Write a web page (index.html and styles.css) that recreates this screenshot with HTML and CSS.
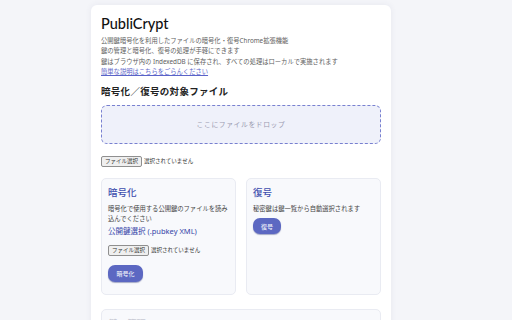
FILE: index.html
```html
<!DOCTYPE html>
<html lang="ja">
<head>
  <meta charset="UTF-8">
  <title>PubliCrypt</title>
  <link rel="stylesheet" href="styles.css">
</head>
<body>
  <div class="container">
    <h1>PubliCrypt</h1>
    <div class="descricao">
      <p>公開鍵暗号化を利用したファイルの暗号化・復号Chrome拡張機能</p>
      <p>鍵の管理と暗号化、復号の処理が手軽にできます</p>
      <p>鍵はブラウザ内の IndexedDB に保存され、すべての処理はローカルで実施されます</p>
      <p><a href="#">簡単な説明はこちらをごらんください</a></p>
    </div>

    <h2>暗号化／復号の対象ファイル</h2>
    <div class="dropzone">ここにファイルをドロップ</div>
    <div class="arquivo">
      <span class="btn-arquivo">ファイル選択</span>
      <span>選択されていません</span>
    </div>

    <div class="cartoes">
      <div class="cartao">
        <h3>暗号化</h3>
        <p class="texto">暗号化で使用する公開鍵のファイルを読み込んでください</p>
        <div class="link-chave">公開鍵選択 (.pubkey XML)</div>
        <div class="arquivo pequeno">
          <span class="btn-arquivo">ファイル選択</span>
          <span>選択されていません</span>
        </div>
        <button class="btn-acao">暗号化</button>
      </div>
      <div class="cartao">
        <h3>復号</h3>
        <p class="texto">秘密鍵は鍵一覧から自動選択されます</p>
        <button class="btn-acao curto">復号</button>
      </div>
    </div>

    <div class="cartao largo">
      <h3 class="apagado">鍵の管理</h3>
    </div>
  </div>
</body>
</html>
```

FILE: styles.css
```css
body {
  background-color: #f4f5f9;
  margin: 0;
  font-family: "Noto Sans", "Noto Sans CJK JP", sans-serif;
  color: #222;
}

.container {
  width: 280px;
  margin: 5px 0 0 91px;
  padding: 10px 10px 20px;
  background-color: white;
  border-radius: 6px;
  box-shadow: 0 0 6px rgba(60, 70, 120, 0.08);
}

h1 {
  font-family: Lato, "Noto Sans", sans-serif;
  font-size: 14.5px;
  font-weight: 500;
  margin: 0 0 3px;
  line-height: 18px;
  color: #111;
}

.descricao p {
  margin: 0;
  font-size: 6.3px;
  line-height: 10.4px;
  color: #606060;
  white-space: nowrap;
}

.descricao a {
  color: #5a63c8;
}

h2 {
  font-size: 9.5px;
  font-weight: 600;
  letter-spacing: 0.3px;
  margin: 7px 0 6px;
  line-height: 14px;
  color: #222;
}

.dropzone {
  height: 37px;
  border: 1px dashed #7880d0;
  border-radius: 6px;
  background-color: #eff1fa;
  display: flex;
  align-items: center;
  justify-content: center;
  font-size: 6.8px;
  letter-spacing: 0.6px;
  color: #9a9ab0;
}

.arquivo {
  display: flex;
  align-items: center;
  gap: 2px;
  margin: 12px 0 0;
  font-size: 5.5px;
  color: #333;
}

.btn-arquivo {
  border: 1px solid #8f8f8f;
  border-radius: 2px;
  background-color: #efefef;
  padding: 1px 3px;
  line-height: 7px;
}

.cartoes {
  display: grid;
  grid-template-columns: 1fr 1fr;
  gap: 10px;
  margin-top: 11px;
}

.cartao {
  box-sizing: border-box;
  background-color: #f8f9fc;
  border: 1px solid #e9ebf2;
  border-radius: 5px;
  padding: 7px 6px;
  height: 117px;
}

.cartao h3 {
  font-size: 9.5px;
  font-weight: 500;
  color: #3f4fae;
  margin: 0 0 4px;
  line-height: 14px;
}

.texto {
  margin: 0;
  font-size: 6.3px;
  line-height: 10.5px;
  color: #444;
}

.link-chave {
  font-size: 7.5px;
  color: #3545a8;
  margin-top: 1px;
  line-height: 11px;
}

.arquivo.pequeno {
  margin-top: 8px;
}

.btn-acao {
  display: block;
  margin-top: 9px;
  width: 35px;
  height: 17px;
  border: none;
  border-radius: 7px;
  background-color: #5c68c2;
  color: white;
  font-family: inherit;
  font-size: 6px;
  padding: 0;
  box-shadow: 0 1px 1px rgba(40, 50, 120, 0.4);
}

.btn-acao.curto {
  width: 28px;
  height: 16px;
  margin-top: 4px;
}

.cartao.largo {
  margin-top: 14px;
  height: 40px;
}

.apagado {
  color: #c8cad4 !important;
}
```
